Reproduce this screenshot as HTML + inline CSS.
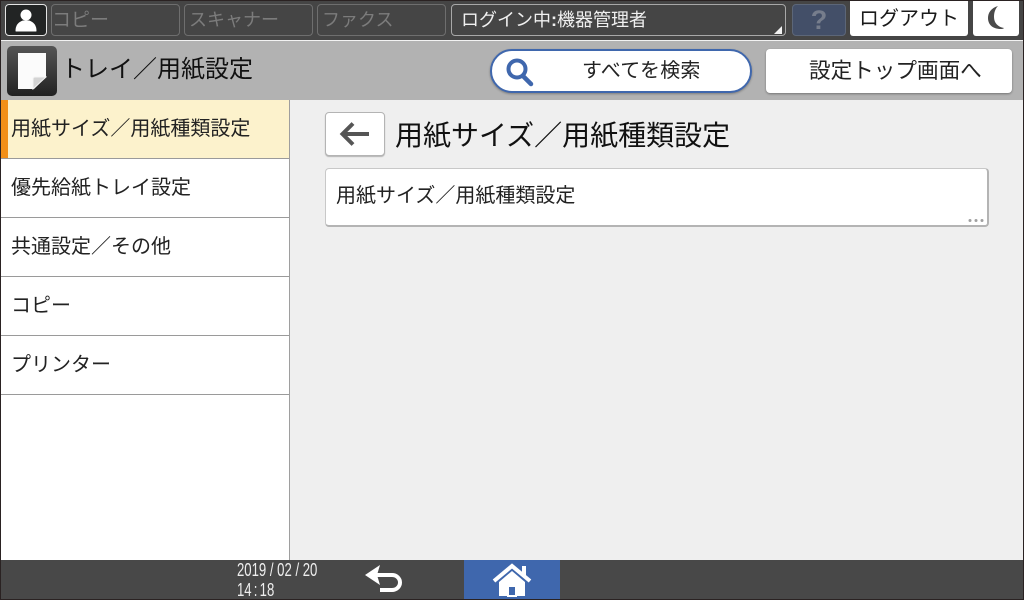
<!DOCTYPE html>
<html lang="ja"><head><meta charset="utf-8"><style>
html,body{margin:0;padding:0;width:1024px;height:600px;overflow:hidden;background:#efefef;font-family:"Liberation Sans","Noto Sans CJK JP",sans-serif;color:#1a1a1a}
div,span{position:absolute;box-sizing:border-box;white-space:nowrap}
.tb{top:4px;height:32px;width:129px;border:1px solid #6e6e6e;border-radius:4px;color:#7c7c7c;font-size:18px;line-height:31px;padding-left:4px}
.it{left:1px;width:288px;height:59px;background:#fff;border-bottom:1px solid #9a9a9a;font-size:20px;line-height:58px;padding-left:10px;color:#222}
</style></head><body>
<div style="left:0;top:0;width:1024px;height:600px;overflow:hidden">
<div style="left:0;top:0;width:1024px;height:40px;background:#454545;border-top:1px solid #2a2222"></div>
<div style="left:0;top:40px;width:1024px;height:1px;background:#f2f2f2"></div>
<div style="left:0;top:41px;width:1024px;height:59px;background:#b2b2b2"></div>

<div style="left:5px;top:4px;width:42px;height:32px;background:#222424;border:1px solid #e4e4e4;border-radius:4px"></div>
<svg style="position:absolute;left:15px;top:8px" width="22" height="24" viewBox="0 0 22 24"><circle cx="11" cy="7" r="5.5" fill="#fff"/><path d="M1 23c0-7 4-9 7-10h6c3 1 7 3 7 10z" fill="#fff" stroke="#fff" stroke-linejoin="round"/></svg>
<div class="tb" style="left:51px;padding-left:0;font-size:19px">コピー</div>
<div class="tb" style="left:184px">スキャナー</div>
<div class="tb" style="left:317px">ファクス</div>
<div class="tb" style="left:451px;width:335px;color:#f0f0f0;border-color:#a8a8a8;padding-left:9px">ログイン中<b style="font-weight:700">:</b>機器管理者</div>
<svg style="position:absolute;left:774px;top:26px" width="9" height="8"><path d="M8 0V8H0z" fill="#f2f2f2"/></svg>
<div style="left:792px;top:4px;width:54px;height:32px;background:#434f68;border:1px solid #5c6678;border-radius:4px;color:#767d8c;font-size:27px;font-weight:700;line-height:30px;text-align:center">?</div>
<div style="left:850px;top:1px;width:118px;height:35px;background:#fff;border-radius:0 0 3px 3px;color:#1a1a1a;font-size:20px;line-height:37px;text-align:center">ログアウト</div>
<div style="left:973px;top:1px;width:46px;height:35px;background:#fff;border-radius:0 0 3px 3px"></div>
<svg style="position:absolute;left:985px;top:6px" width="22" height="25" viewBox="0 0 22 25"><path d="M13 0C6 2 3 7 3 12c0 6 4 11 13 11 1 0 2 0 3-1C13 21 9 17 9 11 9 7 10 3 13 0z" fill="#4a4a4a"/></svg>

<div style="left:7px;top:46px;width:50px;height:50px;border-radius:5px;background:linear-gradient(#555,#222)"></div>
<svg style="position:absolute;left:17px;top:52px" width="30" height="38" viewBox="0 0 30 38"><path d="M1 1H29V25L17 37H1z" fill="#fbfbfb"/><path d="M29 25H18Q16 25 16 27V37z" fill="#d4d4d4" stroke="#f4f4f4" stroke-width="1"/></svg>
<div style="left:61px;top:52px;font-size:24px;line-height:36px;color:#111">トレイ／用紙設定</div>

<div style="left:490px;top:49px;width:262px;height:44px;background:#fff;border:2px solid #3f67ad;border-radius:22px;box-shadow:0 1px 2px rgba(0,0,0,.3);font-size:20px;line-height:41px;padding-left:90px;color:#222;letter-spacing:.2px">すべてを検索</div>
<svg style="position:absolute;left:504px;top:57px" width="32" height="32" viewBox="0 0 32 32"><circle cx="13" cy="12" r="8.5" fill="none" stroke="#3f67ad" stroke-width="4"/><path d="M19 19l8 8" stroke="#3f67ad" stroke-width="4.5" stroke-linecap="round"/></svg>
<div style="left:766px;top:49px;width:246px;height:44px;background:#fff;border-radius:4px;box-shadow:0 1px 2px rgba(0,0,0,.35);line-height:0;color:#222"><span style="left:43px;top:22px;font-size:21.6px;line-height:0">設定トップ画面へ</span></div>

<div style="left:1px;top:100px;width:289px;height:460px;background:#fff;border-right:1px solid #9e9e9e"></div>
<div class="it" style="top:100px;background:#fcf2cc">用紙サイズ／用紙種類設定</div>
<div style="left:1px;top:100px;width:7px;height:58px;background:#f29018"></div>
<div class="it" style="top:159px">優先給紙トレイ設定</div>
<div class="it" style="top:218px">共通設定／その他</div>
<div class="it" style="top:277px">コピー</div>
<div class="it" style="top:336px">プリンター</div>

<div style="left:325px;top:112px;width:60px;height:44px;background:#fff;border:1px solid #b4b4b4;border-radius:4px;box-shadow:0 1px 1px rgba(0,0,0,.25)"></div>
<svg style="position:absolute;left:339px;top:120px" width="32" height="28" viewBox="0 0 32 28"><path d="M30 14H4M14 3.500L3.500 14 14 24.500" fill="none" stroke="#555" stroke-width="4"/></svg>
<div style="left:395px;top:116px;font-size:28px;line-height:40px;color:#111">用紙サイズ／用紙種類設定</div>

<div style="left:325px;top:168px;width:664px;height:59px;background:#fff;border:1px solid #c8c8c8;border-bottom:2px solid #b4b4b4;border-right:2px solid #b4b4b4;border-radius:4px;font-size:20px;line-height:55px;padding-left:10px;color:#222">用紙サイズ／用紙種類設定</div>
<svg style="position:absolute;left:967px;top:218px" width="18" height="5"><circle cx="3" cy="2.500" r="1.500" fill="#a0a0a0"/><circle cx="9" cy="2.500" r="1.500" fill="#a0a0a0"/><circle cx="15" cy="2.500" r="1.500" fill="#a0a0a0"/></svg>

<div style="left:0;top:560px;width:1024px;height:40px;background:#484848"></div>
<div style="left:237px;top:560px;font-size:18px;line-height:20px;color:#eee;transform:scaleX(.73);transform-origin:0 0">2019 / 02 / 20</div>
<div style="left:237px;top:580px;font-size:18px;line-height:20px;color:#eee;transform:scaleX(.73);transform-origin:0 0;word-spacing:-2px">14 : 18</div>
<svg style="position:absolute;left:363px;top:565px" width="40" height="30" viewBox="0 0 40 30"><path d="M6 10H29a8 7.500 0 0 1 0 15H17" fill="none" stroke="#fff" stroke-width="4"/><path d="M2 10 17 0 14 10 17 20z" fill="#fff"/></svg>
<div style="left:464px;top:560px;width:96px;height:40px;background:#3f67ad"></div>
<svg style="position:absolute;left:492px;top:563px" width="40" height="34" viewBox="0 0 40 34"><path d="M2 18 20 3 38 18" fill="none" stroke="#fff" stroke-width="4"/><path d="M30 3h4v10h-4z" fill="#fff"/><path d="M7 19 20 8 33 19V33H24V23H16V33H7z" fill="#fff"/><path d="M16 23h8v10h-8z" fill="#3f67ad" stroke="#fff" stroke-width="2"/></svg>

<div style="left:0;top:0;width:1px;height:600px;background:#2a2222"></div>
<div style="left:1023px;top:0;width:1px;height:600px;background:#2a2222"></div>
<div style="left:0;top:599px;width:1024px;height:1px;background:#2a2222"></div>
</div>
</body></html>
